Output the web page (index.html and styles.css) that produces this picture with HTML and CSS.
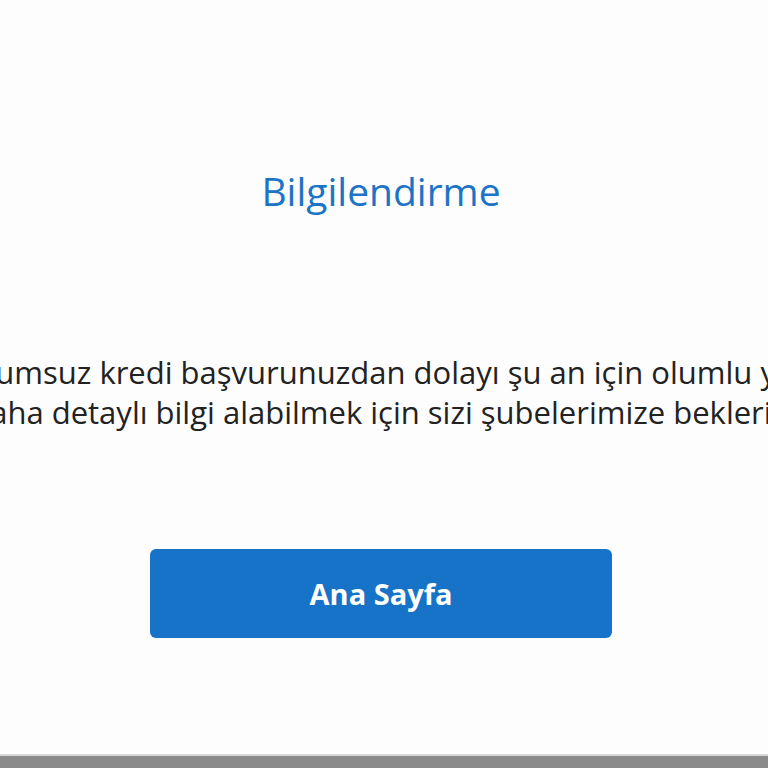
FILE: index.html
```html
<!DOCTYPE html>
<html lang="tr">
<head>
<meta charset="utf-8">
<title>Bilgilendirme</title>
<link rel="stylesheet" href="styles.css">
</head>
<body>
<main class="page">
  <h1 class="title">Bilgilendirme</h1>
  <div class="message">
    <p class="line">Son dönemdeki olumsuz kredi başvurunuzdan dolayı şu an için olumlu yanıt veremiyoruz.</p>
    <p class="line">Daha detaylı bilgi alabilmek için sizi şubelerimize bekleriz.</p>
  </div>
  <button class="btn" type="button">Ana Sayfa</button>
</main>
<footer class="bar"></footer>
</body>
</html>
```
FILE: styles.css
```css
html, body {
  margin: 0;
  padding: 0;
  background: #fdfdfd;
  overflow: hidden;
}
body {
  width: 768px;
  height: 768px;
  display: flex;
  flex-direction: column;
  font-family: "Open Sans", "Noto Sans", sans-serif;
}
.page {
  flex: 1;
  display: flex;
  flex-direction: column;
  align-items: center;
  padding-top: 165px;
  padding-right: 6px;
}
.title {
  margin: 0;
  font-size: 39px;
  font-weight: 500;
  color: #1c74c6;
  line-height: 52px;
}
.message {
  margin-top: 135px;
  display: flex;
  flex-direction: column;
  align-items: center;
}
.line {
  margin: 0;
  white-space: nowrap;
  font-size: 31px;
  font-weight: 500;
  line-height: 40px;
  color: #222;
}
.btn {
  margin-top: 117px;
  width: 462px;
  height: 89px;
  border: none;
  border-radius: 6px;
  background: #1673c8;
  color: #fff;
  font-family: inherit;
  font-size: 29px;
  font-weight: 700;
}
.bar {
  height: 12px;
  background: #8a8a8a;
  border-top: 2px solid #d8d8d8;
}
```
